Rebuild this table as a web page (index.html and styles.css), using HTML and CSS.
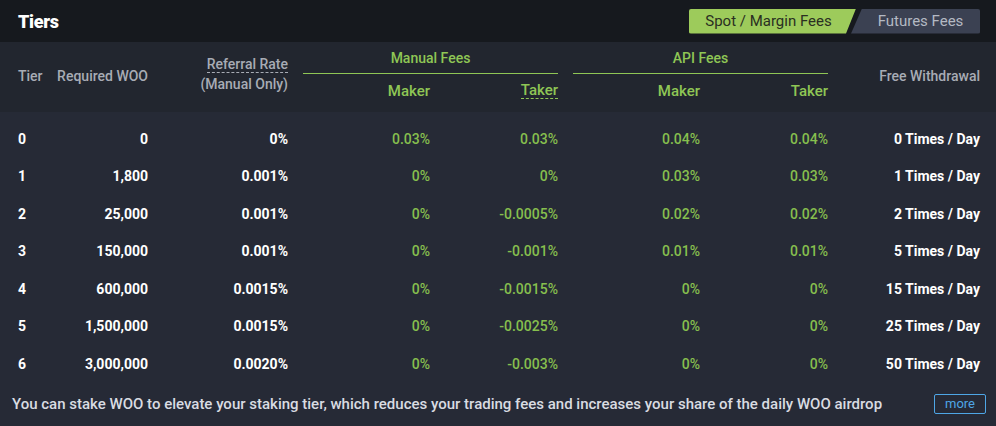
FILE: index.html
```html
<!DOCTYPE html>
<html lang="en">
<head>
    <meta charset="UTF-8">
    <meta name="viewport" content="width=device-width, initial-scale=1.0">
    <link rel="stylesheet" href="styles.css">
    <title>Tiers</title>
</head>
<body>
    <div class="panel">

        <div class="topbar">
            <span class="title">Tiers</span>
            <div class="tabs">
                <span class="tab tab-spot">Spot / Margin Fees</span>
                <span class="tab tab-futures">Futures Fees</span>
            </div>
        </div>

        <div class="thead">
            <div class="th th-tier">Tier</div>
            <div class="th th-woo">Required WOO</div>
            <div class="th th-ref">
                <span class="dashed">Referral Rate</span>
                <span>(Manual Only)</span>
            </div>
            <div class="group group-manual">Manual Fees</div>
            <div class="group group-api">API Fees</div>
            <div class="sub sub-mm">Maker</div>
            <div class="sub sub-mt"><span class="dashed-green">Taker</span></div>
            <div class="sub sub-am">Maker</div>
            <div class="sub sub-at">Taker</div>
            <div class="th th-free">Free Withdrawal</div>
        </div>

        <div class="tbody" id="rows">
            <div class="row">
                <span class="tier">0</span><span class="num">0</span><span class="num">0%</span><span></span>
                <span class="fee">0.03%</span><span class="fee">0.03%</span><span></span>
                <span class="fee">0.04%</span><span class="fee">0.04%</span><span class="num">0 Times / Day</span>
            </div>
            <div class="row">
                <span class="tier">1</span><span class="num">1,800</span><span class="num">0.001%</span><span></span>
                <span class="fee">0%</span><span class="fee">0%</span><span></span>
                <span class="fee">0.03%</span><span class="fee">0.03%</span><span class="num">1 Times / Day</span>
            </div>
            <div class="row">
                <span class="tier">2</span><span class="num">25,000</span><span class="num">0.001%</span><span></span>
                <span class="fee">0%</span><span class="fee">-0.0005%</span><span></span>
                <span class="fee">0.02%</span><span class="fee">0.02%</span><span class="num">2 Times / Day</span>
            </div>
            <div class="row">
                <span class="tier">3</span><span class="num">150,000</span><span class="num">0.001%</span><span></span>
                <span class="fee">0%</span><span class="fee">-0.001%</span><span></span>
                <span class="fee">0.01%</span><span class="fee">0.01%</span><span class="num">5 Times / Day</span>
            </div>
            <div class="row">
                <span class="tier">4</span><span class="num">600,000</span><span class="num">0.0015%</span><span></span>
                <span class="fee">0%</span><span class="fee">-0.0015%</span><span></span>
                <span class="fee">0%</span><span class="fee">0%</span><span class="num">15 Times / Day</span>
            </div>
            <div class="row">
                <span class="tier">5</span><span class="num">1,500,000</span><span class="num">0.0015%</span><span></span>
                <span class="fee">0%</span><span class="fee">-0.0025%</span><span></span>
                <span class="fee">0%</span><span class="fee">0%</span><span class="num">25 Times / Day</span>
            </div>
            <div class="row">
                <span class="tier">6</span><span class="num">3,000,000</span><span class="num">0.0020%</span><span></span>
                <span class="fee">0%</span><span class="fee">-0.003%</span><span></span>
                <span class="fee">0%</span><span class="fee">0%</span><span class="num">50 Times / Day</span>
            </div>
        </div>

        <div class="footer">
            <p>You can stake WOO to elevate your staking tier, which reduces your trading fees and increases your share of the daily WOO airdrop</p>
            <a href="#" class="more">more</a>
        </div>

    </div>
</body>
</html>
```

FILE: styles.css
```css
*{
    margin: 0;
    padding: 0;
    box-sizing: border-box;
    font-family: Roboto, 'Noto Sans', Arial, sans-serif;
}

body{
    background: #262a36;
    width: 996px;
    height: 426px;
    overflow: hidden;
}

.topbar{
    height: 42px;
    background: #16191e;
    display: flex;
    align-items: center;
    justify-content: space-between;
    padding: 0 16px 0 18px;
}

.title{
    color: #ffffff;
    font-size: 18px;
    font-weight: 900;
    letter-spacing: -0.3px;
}

.tabs{
    display: flex;
    height: 25px;
}

.tab{
    display: flex;
    align-items: center;
    justify-content: center;
    font-size: 15px;
    height: 25px;
}

.tab-spot{
    width: 167px;
    background: #9dcb5b;
    color: #2a2f22;
    border-radius: 2px 0 0 2px;
    padding-right: 8px;
    clip-path: polygon(0 0, 100% 0, calc(100% - 10px) 100%, 0 100%);
}

.tab-futures{
    width: 129px;
    margin-left: -5px;
    background: #3b4152;
    color: #b4b9c3;
    border-radius: 0 2px 2px 0;
    padding-left: 10px;
    clip-path: polygon(11px 0, 100% 0, 100% 100%, 0 100%);
}

/* shared column tracks for header and rows */
.thead, .row{
    display: grid;
    grid-template-columns: 37px 93px 140px 15px 127px 128px 15px 127px 128px 152px;
    padding: 0 16px 0 18px;
}

.thead{
    background: #22262f;
    grid-template-rows: 32px 36px;
    height: 70px;
    color: #a8acb5;
    font-size: 14px;
    font-weight: 500;
}

.th{
    grid-row: 1 / span 2;
    display: flex;
    align-items: center;
}

.th-tier{
    grid-column: 1;
}

.th-woo{
    grid-column: 2;
    justify-content: flex-end;
}

.th-ref{
    grid-column: 3;
    flex-direction: column;
    align-items: flex-end;
    justify-content: center;
    line-height: 19px;
    padding-bottom: 3px;
}

.dashed{
    border-bottom: 1px dashed #a8acb5;
    line-height: 16px;
    margin-bottom: 2px;
}

.th-free{
    grid-column: 10;
    justify-content: flex-end;
}

.group{
    grid-row: 1;
    color: #8fc655;
    font-size: 14px;
    font-weight: 500;
    display: flex;
    align-items: center;
    justify-content: center;
    border-bottom: 1px solid #8fc655;
    padding-top: 1px;
}

.group-manual{
    grid-column: 5 / span 2;
}

.group-api{
    grid-column: 8 / span 2;
}

.sub{
    grid-row: 2;
    color: #8fc655;
    font-size: 15px;
    font-weight: 500;
    display: flex;
    align-items: center;
    justify-content: flex-end;
    padding-bottom: 2px;
}

.sub-mm{ grid-column: 5; }
.sub-mt{ grid-column: 6; }
.sub-am{ grid-column: 8; }
.sub-at{ grid-column: 9; }

.dashed-green{
    border-bottom: 1px dashed #8fc655;
    line-height: 15px;
}

.tbody{
    padding-top: 8px;
}

.row{
    height: 37.5px;
    align-items: center;
    font-size: 14px;
}

.tier{
    color: #ffffff;
    font-weight: 700;
}

.num{
    color: #ffffff;
    font-weight: 700;
    text-align: right;
}

.fee{
    color: #86bf4e;
    font-weight: 500;
    text-align: right;
}

.footer{
    display: flex;
    align-items: center;
    justify-content: space-between;
    padding: 11px 10px 0 12px;
}

.footer p{
    color: #d9dce2;
    font-size: 15px;
    font-weight: 500;
}

.more{
    width: 52px;
    height: 20px;
    border: 1px solid #4ea6e6;
    border-radius: 2px;
    color: #4ea6e6;
    font-size: 13px;
    text-decoration: none;
    display: flex;
    align-items: center;
    justify-content: center;
}
```
